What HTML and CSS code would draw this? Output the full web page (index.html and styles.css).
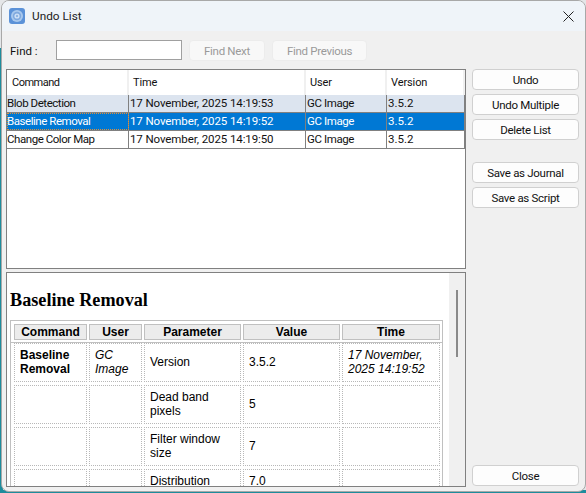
FILE: index.html
```html
<!DOCTYPE html>
<html lang="en">
<head>
<meta charset="utf-8">
<title>Undo List</title>
<link rel="stylesheet" href="styles.css">
</head>
<body>
<div class="window">
  <header class="titlebar">
    <svg class="app-icon" viewBox="0 0 16 16" width="16" height="16">
      <rect x="0" y="0" width="16" height="16" rx="3" fill="#5b92d8"/>
      <circle cx="8" cy="8" r="6" fill="#a9c9ee"/>
      <circle cx="8" cy="8" r="4.2" fill="#7fa9de"/>
      <circle cx="8" cy="8" r="2.6" fill="#cfe1f6"/>
      <circle cx="8" cy="8" r="1.2" fill="#8fb5e4"/>
    </svg>
    <span class="title">Undo List</span>
    <svg class="close-x" viewBox="0 0 11 11" width="11" height="11">
      <path d="M.5.5l10 10M10.5.5l-10 10" stroke="#222" stroke-width="1" fill="none"/>
    </svg>
  </header>
  <div class="findbar">
    <label class="find-label">Find :</label>
    <input class="find-input" type="text">
    <button class="btn find-next" disabled>Find Next</button>
    <button class="btn find-prev" disabled>Find Previous</button>
  </div>
  <div class="body">
    <div class="left">
      <div class="list">
        <div class="list-head">
          <div class="hcell c1">Command</div>
          <div class="hcell c2">Time</div>
          <div class="hcell c3">User</div>
          <div class="hcell c4">Version</div>
        </div>
        <div class="row row-alt">
          <div class="cell c1">Blob Detection</div>
          <div class="cell c2">17 November, 2025 14:19:53</div>
          <div class="cell c3">GC Image</div>
          <div class="cell c4">3.5.2</div>
        </div>
        <div class="row row-sel">
          <div class="cell c1 focus">Baseline Removal</div>
          <div class="cell c2">17 November, 2025 14:19:52</div>
          <div class="cell c3">GC Image</div>
          <div class="cell c4">3.5.2</div>
        </div>
        <div class="row">
          <div class="cell c1">Change Color Map</div>
          <div class="cell c2">17 November, 2025 14:19:50</div>
          <div class="cell c3">GC Image</div>
          <div class="cell c4">3.5.2</div>
        </div>
      </div>
      <div class="report">
        <div class="report-view">
          <h3 class="report-title">Baseline Removal</h3>
          <table class="report-table">
            <colgroup><col class="w1"><col class="w2"><col class="w3"><col class="w4"><col class="w5"></colgroup>
            <thead>
              <tr><th>Command</th><th>User</th><th>Parameter</th><th>Value</th><th>Time</th></tr>
            </thead>
            <tbody>
              <tr><td class="b">Baseline Removal</td><td class="i">GC Image</td><td>Version</td><td>3.5.2</td><td class="i">17 November, 2025 14:19:52</td></tr>
              <tr><td></td><td></td><td>Dead band pixels</td><td>5</td><td></td></tr>
              <tr><td></td><td></td><td>Filter window size</td><td>7</td><td></td></tr>
              <tr><td></td><td></td><td>Distribution</td><td>7.0</td><td></td></tr>
            </tbody>
          </table>
        </div>
        <div class="scroll"><div class="thumb"></div></div>
      </div>
    </div>
    <aside class="side">
      <button class="btn">Undo</button>
      <button class="btn">Undo Multiple</button>
      <button class="btn gap-after">Delete List</button>
      <button class="btn">Save as Journal</button>
      <button class="btn">Save as Script</button>
      <button class="btn close">Close</button>
    </aside>
  </div>
</div>
</body>
</html>
```
FILE: styles.css
```css
* { box-sizing: border-box; }
html, body { margin: 0; height: 100%; }
body { background: linear-gradient(#1e8c9c, #1e8c9c) 0 100% / 100% 3px no-repeat, linear-gradient(#1e8c9c, #1e8c9c) 0 100% / 3px 445px no-repeat, #e4e6e8; overflow: hidden; font: 11.5px Roboto, "Noto Sans", sans-serif; color: #111; }
.window { width: 585px; height: 492px; margin-left: 1px; background: #f0f0f0; border: 1px solid #a8a8a8; border-radius: 8px; display: flex; flex-direction: column; overflow: hidden; }
.titlebar { height: 30px; flex: none; background: #eff4f9; display: flex; align-items: center; padding: 0 10px 0 7px; }
.app-icon { flex: none; margin-right: 7px; }
.title { font-size: 11.8px; flex: 1; color: #222; }
.close-x { flex: none; margin-right: 1px; }
.findbar { height: 38px; flex: none; display: flex; align-items: center; padding: 0 0 0 8px; }
.find-label { width: 46px; padding-top: 2px; }
.find-input { width: 126px; height: 20px; border: 1px solid #a0a0a0; background: #fff; margin-right: 7px; padding: 0; }
.btn { font: inherit; letter-spacing: -.3px; color: #111; height: 21px; background: #fdfdfd; border: 1px solid #d0d0d0; border-radius: 4px; padding: 1px 0 0; width: 107px; }
.btn:disabled { background: #f8f8f8; border-color: #ececec; color: #9a9a9a; padding-top: 2px; }
.find-next { width: 76px; margin-right: 7px; }
.find-prev { width: 95px; }
.body { flex: 1; display: flex; min-height: 0; padding-left: 4px; }
.left { width: 460px; flex: none; }
.list { height: 200px; background: #fff; border: 1px solid #808080; margin-bottom: 3px; }
.list-head { display: flex; height: 25px; }
.hcell { padding-left: 4px; font-size: 11px; line-height: 26px; background: #fff; border-right: 2px solid #f0f0f0; letter-spacing: -.1px; }
.hcell.c1 { padding-left: 5px; letter-spacing: -.5px; }
.row { display: flex; height: 18px; border-bottom: 1px solid #808080; }
.cell { line-height: 17px; border-right: 1px solid #808080; white-space: nowrap; overflow: hidden; padding-left: 1px; }
.cell.c1 { padding-left: 0; letter-spacing: -.45px; }
.cell.c2 { letter-spacing: -.1px; }
.cell.c3 { letter-spacing: -.4px; }
.c1 { width: 122px; } .c2 { width: 177px; } .c3 { width: 81px; } .c4 { width: 78px; }
.row-alt { background: #dce4ef; }
.row-sel { background: #0078d4; color: #fff; }
.focus { outline: 1px dotted #e0903a; outline-offset: -1px; }
.report { height: 215px; background: #fff; border: 1px solid #808080; display: flex; overflow: hidden; }
.report-view { flex: 1; overflow: hidden; padding: 0 3px; font: 12px "Liberation Sans", Arial, sans-serif; color: #000; }
.report-title { font: bold 18.2px/22px "Liberation Serif", "Times New Roman", serif; margin: 16px 0 9px; }
.report-table { width: 433px; table-layout: fixed; border: 1px solid #c0c0c0; border-collapse: separate; border-spacing: 2px 3px; padding: 0 0 0 1px; background: linear-gradient(#c0c0c0, #c0c0c0) 0 21px / 100% 1px no-repeat; }
.w1 { width: 73px; } .w2 { width: 53px; } .w3 { width: 97px; } .w4 { width: 97px; } .w5 { width: 98px; }
th { background: #ececec; border: 1px solid #c0c0c0; height: 16px; padding: 0; font-weight: bold; }
td { border: 1px dotted #b8b8b8; padding: 4px 5px 5px; line-height: 14px; background: #fff; }
td.b { font-weight: bold; }
td.i { font-style: italic; }
.scroll { width: 16px; flex: none; background: #f0f0f0; padding: 17px 0 0 7px; }
.thumb { width: 2px; height: 67px; background: #8a8a8a; }
.side { flex: 1; display: flex; flex-direction: column; gap: 4px; padding: 0 0 5px 6px; }
.gap-after { margin-bottom: 18px; }
.close { margin-top: auto; padding-top: 0; }
```
